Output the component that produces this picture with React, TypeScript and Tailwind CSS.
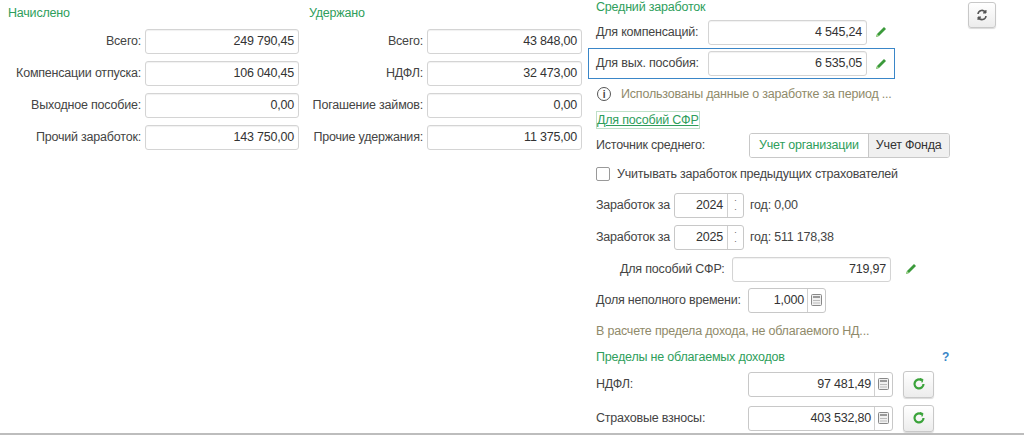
import React from "react";

const F = { fontFamily: '"Liberation Sans", Arial, sans-serif' };

function Input({ w, v, cls = "" }: { w: string; v: string; cls?: string }) {
  return (
    <div className={`shrink-0 h-[25px] border border-[#d4d4d4] rounded-[3px] bg-white flex items-center justify-end pr-[4px] text-[#333] shadow-[inset_0_1px_1px_rgba(0,0,0,0.06)] ${w} ${cls}`}>
      {v}
    </div>
  );
}

function Pencil() {
  return (
    <svg width="14" height="14" viewBox="0 0 14 14">
      <path d="M2 12 L3 9 L10 2 L12 4 L5 11 Z" fill="#3b9a3b" />
      <path d="M2 12 L3 9 L5 11 Z" fill="#a6d68f" />
    </svg>
  );
}

function Calc() {
  return (
    <svg width="11" height="12" viewBox="0 0 11 12">
      <rect x="0.5" y="0.5" width="10" height="11" rx="1" fill="#f0f0f0" stroke="#888" />
      <rect x="2" y="2" width="7" height="2" fill="#999" />
      <rect x="2" y="6" width="7" height="1" fill="#bbb" />
      <rect x="2" y="8.5" width="7" height="1" fill="#bbb" />
    </svg>
  );
}

function Refresh() {
  return (
    <div className="w-[31px] h-[27px] border border-[#c8c8c8] rounded-[3px] bg-gradient-to-b from-white to-[#ececec] flex items-center justify-center shadow-[0_1px_1px_rgba(0,0,0,0.15)]">
      <svg width="14" height="14" viewBox="0 0 14 14" fill="none" stroke="#3aa33a" strokeWidth="2.2">
        <path d="M11.5 7 A4.5 4.5 0 1 1 9.5 3.2" />
        <path d="M8 1.5 L11 2.5 L10 5.5" fill="#3aa33a" strokeWidth="1" />
      </svg>
    </div>
  );
}

function Row({ label, v, lw, iw }: { label: string; v: string; lw: string; iw: string }) {
  return (
    <div className="flex items-center h-[32px]">
      <div className={`${lw} shrink-0 text-right pr-[4px] text-[#444]`}>{label}</div>
      <Input w={iw} v={v} />
    </div>
  );
}

function Spin({ v }: { v: string }) {
  return (
    <div className="shrink-0 flex h-[25px] w-[70px] border border-[#c8c8c8] rounded-[3px] bg-white text-[#333]">
      <div className="flex-1 flex items-center justify-end pr-[4px]">{v}</div>
      <div className="w-[16px] border-l border-[#d0d0d0] flex flex-col items-center justify-center text-[9px] leading-[9px] text-[#666]">
        <span>·</span>
        <span>·</span>
      </div>
    </div>
  );
}

export default function App() {
  return (
    <div style={F} className="w-[1024px] h-[436px] bg-white relative overflow-hidden text-[#444] text-[12.5px] whitespace-nowrap tracking-[-0.2px]">
      <div className="flex">
        <div className="w-[301px] shrink-0 pl-[8px] pt-[4px]">
          <div className="text-[#2e9e5b] h-[20px]">Начислено</div>
          <div className="mt-[1px]">
            <Row label="Всего:" v="249 790,45" lw="w-[137px]" iw="w-[154px]" />
            <Row label="Компенсации отпуска:" v="106 040,45" lw="w-[137px]" iw="w-[154px]" />
            <Row label="Выходное пособие:" v="0,00" lw="w-[137px]" iw="w-[154px]" />
            <Row label="Прочий заработок:" v="143 750,00" lw="w-[137px]" iw="w-[154px]" />
          </div>
        </div>
        <div className="w-[286px] shrink-0 pl-[8px] pt-[4px]">
          <div className="text-[#2e9e5b] h-[20px]">Удержано</div>
          <div className="mt-[1px]">
            <Row label="Всего:" v="43 848,00" lw="w-[118px]" iw="w-[155px]" />
            <Row label="НДФЛ:" v="32 473,00" lw="w-[118px]" iw="w-[155px]" />
            <Row label="Погашение займов:" v="0,00" lw="w-[118px]" iw="w-[155px]" />
            <Row label="Прочие удержания:" v="11 375,00" lw="w-[118px]" iw="w-[155px]" />
          </div>
        </div>
        <div className="w-[370px] shrink-0 pl-[1px]">
          <div className="pl-[8px] text-[#2e9e5b] h-[16px] leading-[14px]">Средний заработок</div>
          <div className="flex items-center h-[32px] pl-[8px]">
            <div className="w-[112px] shrink-0">Для компенсаций:</div>
            <Input w="w-[159px]" v="4 545,24" />
            <div className="ml-[7px]"><Pencil /></div>
          </div>
          <div className="flex items-center h-[31px] pl-[7px] w-[307px] border border-[#3a86c8]">
            <div className="w-[112px] shrink-0">Для вых. пособия:</div>
            <Input w="w-[159px]" v="6 535,05" />
            <div className="ml-[7px]"><Pencil /></div>
          </div>
          <div className="flex items-center h-[30px] pl-[9px] text-[#8f8a6a]">
            <div className="w-[14px] h-[14px] shrink-0 rounded-full border border-[#555] flex items-center justify-center text-[10px] font-bold text-[#444] mr-[10px]">i</div>
            Использованы данные о заработке за период ...
          </div>
          <div className="pl-[8px] h-[22px] flex items-center">
            <span className="text-[#2e9e5b] underline border border-[#bfe0c8] leading-[16px]">Для пособий СФР</span>
          </div>
          <div className="flex items-center h-[28px] pl-[8px]">
            <div className="w-[153px] shrink-0">Источник среднего:</div>
            <div className="flex shrink-0 h-[25px] border border-[#c8c8c8] rounded-[3px] overflow-hidden">
              <div className="px-[9px] flex items-center text-[#2e9e5b] bg-white border-r border-[#c8c8c8]">Учет организации</div>
              <div className="px-[7px] flex items-center bg-[#f0f0f0] text-[#333]">Учет Фонда</div>
            </div>
          </div>
          <div className="flex items-center h-[30px] pl-[8px]">
            <div className="w-[14px] h-[14px] shrink-0 border border-[#999] rounded-[2px] bg-white mr-[7px]" />
            Учитывать заработок предыдущих страхователей
          </div>
          <div className="flex items-center h-[32px] pl-[8px] gap-[4px]">
            <span>Заработок за</span><Spin v="2024" /><span className="ml-[2px]">год: 0,00</span>
          </div>
          <div className="flex items-center h-[32px] pl-[8px] gap-[4px]">
            <span>Заработок за</span><Spin v="2025" /><span className="ml-[2px]">год: 511 178,38</span>
          </div>
          <div className="flex items-center h-[32px] pl-[32px]">
            <div className="w-[112px] shrink-0">Для пособий СФР:</div>
            <Input w="w-[159px]" v="719,97" />
            <div className="ml-[13px]"><Pencil /></div>
          </div>
          <div className="flex items-center h-[30px] pl-[8px]">
            <div className="w-[152px] shrink-0">Доля неполного времени:</div>
            <div className="flex shrink-0 h-[25px] w-[78px] border border-[#c8c8c8] rounded-[3px] bg-white">
              <div className="flex-1 flex items-center justify-end pr-[3px] text-[#333]">1,000</div>
              <div className="w-[18px] border-l border-[#d0d0d0] flex items-center justify-center"><Calc /></div>
            </div>
          </div>
          <div className="flex items-center h-[32px] pl-[8px] text-[#8f8a6a]">В расчете предела дохода, не облагаемого НД...</div>
          <div className="flex items-center h-[20px] pl-[8px]">
            <span className="text-[#2e9e5b] w-[346px] shrink-0">Пределы не облагаемых доходов</span>
            <span className="text-[#3a86c8] font-bold text-[12px]">?</span>
          </div>
          <div className="flex items-center h-[34px] pl-[8px]">
            <div className="w-[152px] shrink-0">НДФЛ:</div>
            <div className="flex shrink-0 h-[25px] w-[145px] border border-[#c8c8c8] rounded-[3px] bg-white">
              <div className="flex-1 flex items-center justify-end pr-[3px] text-[#333]">97 481,49</div>
              <div className="w-[18px] border-l border-[#d0d0d0] flex items-center justify-center"><Calc /></div>
            </div>
            <div className="ml-[10px]"><Refresh /></div>
          </div>
          <div className="flex items-center h-[34px] pl-[8px]">
            <div className="w-[152px] shrink-0">Страховые взносы:</div>
            <div className="flex shrink-0 h-[25px] w-[145px] border border-[#c8c8c8] rounded-[3px] bg-white">
              <div className="flex-1 flex items-center justify-end pr-[3px] text-[#333]">403 532,80</div>
              <div className="w-[18px] border-l border-[#d0d0d0] flex items-center justify-center"><Calc /></div>
            </div>
            <div className="ml-[10px]"><Refresh /></div>
          </div>
        </div>
        <div className="pt-[2px] pl-[11px]">
          <div className="w-[28px] h-[26px] border border-[#c8c8c8] rounded-[3px] bg-gradient-to-b from-white to-[#ececec] flex items-center justify-center shadow-[0_1px_1px_rgba(0,0,0,0.15)]">
            <svg width="12" height="12" viewBox="0 0 12 12" fill="none" stroke="#555" strokeWidth="1.6">
              <path d="M2 5 A4 4 0 0 1 9.5 3.5" />
              <path d="M10 7 A4 4 0 0 1 2.5 8.5" />
              <path d="M10 1 L10 4 L7 4" fill="#555" strokeWidth="1" />
              <path d="M2 11 L2 8 L5 8" fill="#555" strokeWidth="1" />
            </svg>
          </div>
        </div>
      </div>
      <div className="absolute left-0 right-0 bottom-[1px] h-[2px] bg-[#bdbdbd]" />
    </div>
  );
}
